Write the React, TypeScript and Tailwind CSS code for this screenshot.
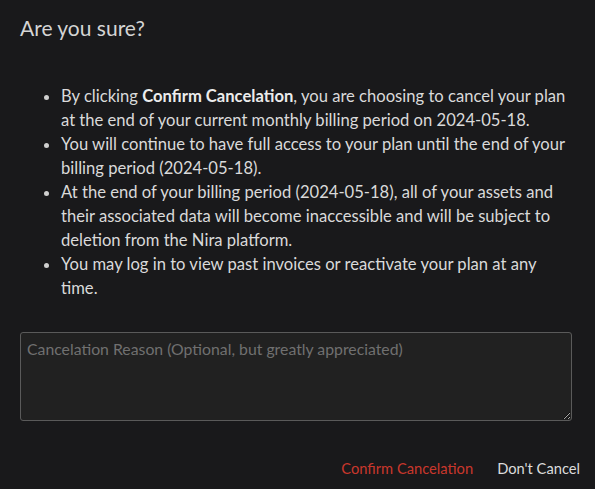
import React from "react";

export default function App() {
  return (
    <div
      className="w-[595px] h-[489px] bg-[#19191b] text-[#d6d6d6] flex flex-col overflow-hidden"
      style={{ fontFamily: "Lato, 'Noto Sans', sans-serif" }}
    >
      <h1 className="text-[21px] leading-[24px] text-[#d4d4d4] pl-5 pt-[16px]">Are you sure?</h1>
      <ul className="list-disc pl-[61px] pr-[20px] mt-[44px] text-[16.6px] leading-[24px] text-[#dadada] marker:text-[#cfcfcf]">
        <li>
          By clicking <span className="font-bold text-[#ececec]">Confirm Cancelation</span>, you are choosing to cancel your plan at the end of your current monthly billing period on 2024-05-18.
        </li>
        <li>You will continue to have full access to your plan until the end of your billing period (2024-05-18).</li>
        <li>
          At the end of your billing period (2024-05-18), all of your assets and their associated data will become inaccessible and will be subject to deletion from the Nira platform.
        </li>
        <li>You may log in to view past invoices or reactivate your plan at any time.</li>
      </ul>
      <div className="pl-5 pr-[23px] mt-[32px]">
        <textarea
          className="w-full h-[89px] block bg-[#212121] border border-[#5a5a5a] rounded-[3px] px-[6px] py-[5px] text-[15.8px] leading-[22px] text-[#d6d6d6] placeholder:text-[#707070] outline-none"
          placeholder="Cancelation Reason (Optional, but greatly appreciated)"
        />
      </div>
      <div className="flex justify-end items-center gap-[24px] pr-[15px] mt-[37px] text-[14.7px] leading-[20px]">
        <button className="text-[#c9372c]">Confirm Cancelation</button>
        <button className="text-[#dcdcdc]">Don't Cancel</button>
      </div>
    </div>
  );
}
